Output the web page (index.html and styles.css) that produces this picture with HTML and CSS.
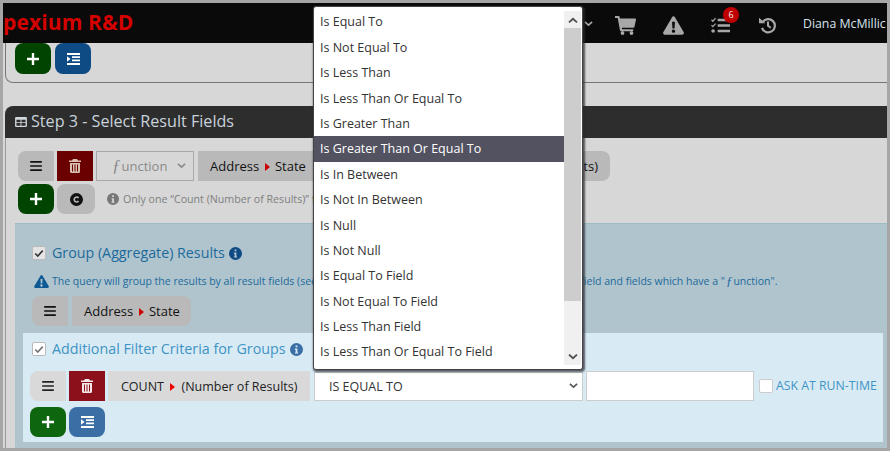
FILE: index.html
```html
<!DOCTYPE html>
<html lang="en">
<head>
<meta charset="utf-8">
<title>Query builder</title>
<link rel="stylesheet" href="styles.css">
</head>
<body>
<svg class="defs" width="0" height="0" aria-hidden="true">
  <defs>
    <symbol id="bars" viewBox="0 0 14 12"><path d="M0 0h14v2H0zM0 5h14v2H0zM0 10h14v2H0z"/></symbol>
    <symbol id="trash" viewBox="0 0 12 14"><path fill-rule="evenodd" d="M4 0h4l1 1.500h3V3H0V1.500h3zM1 4h10v8.500A1.500 1.500 0 0 1 9.500 14h-7A1.500 1.500 0 0 1 1 12.500zM3 5.500v7h1v-7zM5.500 5.500v7h1v-7zM8 5.500v7h1v-7z"/></symbol>
    <symbol id="plus" viewBox="0 0 12 12"><path d="M4.800 0h2.400v4.800H12v2.400H7.200V12H4.800V7.200H0V4.800h4.800z"/></symbol>
    <symbol id="indent" viewBox="0 0 13 12"><path fill-rule="evenodd" d="M0 0h13v2H0zM5 3.300h8v1.700H5zM5 6.500h8v1.700H5zM0 10h13v2H0zM0 3.200l3.600 2.800L0 8.800z"/></symbol>
    <symbol id="info" viewBox="0 0 14 14"><path fill-rule="evenodd" d="M7 0a7 7 0 1 1 0 14A7 7 0 0 1 7 0zM6 2.600v2h2v-2zM5.200 6v1.300H6v2.900h-.8v1.200h3.600v-1.200H8V6z"/></symbol>
    <symbol id="warn" viewBox="0 0 16 14"><path fill-rule="evenodd" d="M8 0c.5 0 .9.300 1.100.700l6.700 11.500c.4.800-.1 1.800-1.100 1.800H1.300C.3 14-.2 13 .2 12.200L6.900.700C7.100.300 7.500 0 8 0zM6.900 4.200l.3 5h1.600l.3-5zM8 10a1.300 1.300 0 1 0 0 2.600A1.300 1.300 0 0 0 8 10z"/></symbol>
    <symbol id="chev" viewBox="0 0 10 6"><path d="M1 .6 5 4.200 9 .6" fill="none" stroke="currentColor" stroke-width="1.800"/></symbol>
  </defs>
</svg>
<div class="frame">
  <header class="topbar">
    <div class="brand">pexium R&amp;D</div>
    <nav class="tools">
      <svg class="tool-chev"><use href="#chev"/></svg>
      <svg class="tool cart" viewBox="0 0 21 19"><path fill-rule="evenodd" d="M0 0h3.600c.5 0 .9.300 1 .800L4.900 2.500H20c.7 0 1.100.6 1 1.200l-1.600 7.200c-.1.500-.5.800-1 .800H6.900l.3 1.600h11v1.900H6c-.5 0-.9-.3-1-.800L2.700 1.900H0zM7.500 15.200a1.900 1.900 0 1 1 0 3.800 1.900 1.900 0 0 1 0-3.800zM16.500 15.200a1.900 1.900 0 1 1 0 3.800 1.900 1.900 0 0 1 0-3.800z"/></svg>
      <svg class="tool warn"><use href="#warn"/></svg>
      <div class="tasks">
        <svg class="tool tasks-icon" viewBox="0 0 20 17"><path d="M7 1.500h13v2.600H7zM7 7.200h13v2.600H7zM7 13h13v2.600H7z"/><path d="M.5 2.500 2 4 4.800.8" fill="none" stroke="currentColor" stroke-width="1.300"/><path d="M.5 8.200 2 9.700l2.800-3.200" fill="none" stroke="currentColor" stroke-width="1.300"/><circle cx="2.200" cy="14.300" r="1.900"/></svg>
        <span class="badge">6</span>
      </div>
      <svg class="tool history" viewBox="0 0 18 17"><path d="M3.700 5.200A6.600 6.600 0 1 1 3 10.800" fill="none" stroke="currentColor" stroke-width="2.200"/><path d="M0 .8 6.300 6.200H0z"/><path d="M9 4.500v4.300l2.800 2" fill="none" stroke="currentColor" stroke-width="2"/></svg>
      <span class="user">Diana McMillic</span>
    </nav>
  </header>

  <section class="step-tail">
    <div class="btn-row">
      <button class="btn btn-add-dark l-round"><svg class="ico-plus"><use href="#plus"/></svg></button>
      <button class="btn btn-indent-dark r-round"><svg class="ico-indent"><use href="#indent"/></svg></button>
    </div>
  </section>

  <section class="step">
    <h2 class="step-title">
      <svg class="ico-table" viewBox="0 0 13 11"><path fill-rule="evenodd" d="M1 0h11a1 1 0 0 1 1 1v9a1 1 0 0 1-1 1H1a1 1 0 0 1-1-1V1a1 1 0 0 1 1-1zM1.500 3v2.700H6V3zM7 3v2.700h4.500V3zM1.500 6.700v2.800H6V6.700zM7 6.700v2.800h4.500V6.700z"/></svg>
      Step 3 - Select Result Fields
    </h2>
    <div class="step-body">
      <div class="field-row">
        <button class="btn btn-grey l-round"><svg class="ico-bars"><use href="#bars"/></svg></button>
        <button class="btn btn-del-dark"><svg class="ico-trash"><use href="#trash"/></svg></button>
        <div class="fn-select"><span><i>ƒ</i>unction</span><svg class="chev"><use href="#chev"/></svg></div>
        <div class="chip chip-wide">
          <span>Address <b class="arrow"></b> State</span>
          <span>COUNT <b class="arrow"></b> (Number of Results)</span>
        </div>
      </div>
      <div class="btn-row second">
        <button class="btn btn-add-dark l-round"><svg class="ico-plus"><use href="#plus"/></svg></button>
        <button class="btn btn-grey r-round btn-c"><svg class="ico-c" viewBox="0 0 14 14"><path fill-rule="evenodd" d="M7 0a7 7 0 1 1 0 14A7 7 0 0 1 7 0zM7.200 3.500a3.500 3.500 0 1 0 2.700 5.700L8.500 8a1.700 1.700 0 1 1 0-2l1.400-1.200a3.500 3.500 0 0 0-2.700-1.300z"/></svg></button>
        <p class="note"><svg class="ico-info"><use href="#info"/></svg><span>Only one “Count (Number of Results)” field may be selected.</span></p>
      </div>

      <div class="group">
        <label class="check-line">
          <span class="check"><svg viewBox="0 0 12 10"><path d="M1.500 5 4.500 8 10.500 1.500" fill="none" stroke="#333" stroke-width="2"/></svg></span>
          <span class="group-title">Group (Aggregate) Results</span>
          <svg class="ico-info blue"><use href="#info"/></svg>
        </label>
        <p class="warning"><svg class="ico-warn"><use href="#warn"/></svg><span>The query will group the results by all result fields (see below). Aggregates are applied to each count or total field and fields which have a "<i>ƒ</i>unction".</span></p>
        <div class="group-row">
          <button class="btn btn-grey l-round"><svg class="ico-bars"><use href="#bars"/></svg></button>
          <div class="chip chip-group"><span>Address <b class="arrow"></b> State</span></div>
        </div>

        <div class="filters">
          <label class="check-line">
            <span class="check light"><svg viewBox="0 0 12 10"><path d="M1.500 5 4.500 8 10.500 1.500" fill="none" stroke="#777" stroke-width="2"/></svg></span>
            <span class="filter-title">Additional Filter Criteria for Groups</span>
            <svg class="ico-info mid"><use href="#info"/></svg>
          </label>
          <div class="filter-row">
            <button class="btn btn-light l-round"><svg class="ico-bars"><use href="#bars"/></svg></button>
            <button class="btn btn-del"><svg class="ico-trash"><use href="#trash"/></svg></button>
            <div class="chip chip-filter"><span>COUNT <b class="arrow bright"></b> (Number of Results)</span></div>
            <div class="op-select"><span>IS EQUAL TO</span><svg class="chev"><use href="#chev"/></svg></div>
            <div class="value-input"></div>
            <span class="empty-check"></span>
            <span class="ask">ASK AT RUN-TIME</span>
          </div>
          <div class="btn-row third">
            <button class="btn btn-add l-round"><svg class="ico-plus"><use href="#plus"/></svg></button>
            <button class="btn btn-indent r-round"><svg class="ico-indent"><use href="#indent"/></svg></button>
          </div>
        </div>
      </div>
    </div>
  </section>

  <div class="dropdown">
    <ul class="options">
      <li>Is Equal To</li>
      <li>Is Not Equal To</li>
      <li>Is Less Than</li>
      <li>Is Less Than Or Equal To</li>
      <li>Is Greater Than</li>
      <li class="selected">Is Greater Than Or Equal To</li>
      <li>Is In Between</li>
      <li>Is Not In Between</li>
      <li>Is Null</li>
      <li>Is Not Null</li>
      <li>Is Equal To Field</li>
      <li>Is Not Equal To Field</li>
      <li>Is Less Than Field</li>
      <li>Is Less Than Or Equal To Field</li>
    </ul>
    <div class="scrollbar">
      <span class="scroll-btn up"><svg><use href="#chev"/></svg></span>
      <span class="scroll-thumb"></span>
      <span class="scroll-track"></span>
      <span class="scroll-btn"><svg><use href="#chev"/></svg></span>
    </div>
  </div>
</div>
</body>
</html>
```

FILE: styles.css
```css
* { box-sizing: border-box; }
html, body { margin: 0; padding: 0; }
body { width: 890px; height: 451px; overflow: hidden; font-family: "Open Sans", sans-serif; color: #222; background: #a6a6a6; }
.defs { position: absolute; }
p, h2, ul { margin: 0; padding: 0; }
button { border: 0; padding: 0; margin: 0; font: inherit; }
svg { display: block; fill: currentColor; }

.frame { position: relative; width: 890px; height: 451px; border: 3px solid #a6a6a6; background: #d7d7d7; overflow: hidden; }

.topbar { height: 40px; background: #0a0a0a; display: flex; align-items: center; justify-content: space-between; }
.brand { color: #d40000; font-size: 21px; font-weight: 700; line-height: 40px; letter-spacing: .12px; margin-top: -2px; }
.tools { display: flex; align-items: center; color: #a8a8a8; width: 306px; height: 40px; flex: none; position: relative; padding-top: 5px; }
.tool-chev { width: 9px; height: 6px; color: #a8a8a8; margin: -4px 22px 0 3px; }
.tool { flex: none; }
.cart { width: 21px; height: 19px; margin-right: 27px; }
.warn { width: 21px; height: 19px; margin-right: 27px; }
.tasks { position: relative; margin-right: 29px; }
.tasks-icon { width: 19px; height: 17px; }
.badge { position: absolute; left: 12px; top: -10px; width: 16px; height: 16px; border-radius: 50%; background: #c00000; color: #eee; font-size: 9px; line-height: 16px; text-align: center; }
.history { width: 18px; height: 17px; margin-right: 26px; }
.user { color: #d8e4ee; font-size: 12.300px; white-space: nowrap; margin-top: -5px; }

.step-tail { margin: 0 -4px 0 2px; height: 40px; border-left: 1px solid #777; border-bottom: 1px solid #777; border-bottom-left-radius: 8px; padding-left: 9px; }

.btn-row { display: flex; gap: 4px; }
.btn { width: 36px; height: 30px; display: flex; align-items: center; justify-content: center; flex: none; color: #fff; }
.step-tail .btn { height: 31px; }
.l-round { border-radius: 8px 0 0 8px; }
.r-round { border-radius: 0 8px 8px 0; }
.btn-row .l-round { border-radius: 8px; }
.btn-row .r-round { border-radius: 8px; }
.btn-add-dark { background: #004400; }
.btn-indent-dark { background: #0e4a84; }
.btn-add { background: #0e660e; }
.btn-indent { background: #3a6ea5; }
.btn-grey { background: #b9b9b9; color: #111; }
.btn-light { background: #d9d9d9; color: #222; }
.btn-del-dark { background: #6a0000; color: #d9c0b0; }
.btn-del { background: #8c101c; color: #f2e8e8; }
.ico-plus { width: 12px; height: 12px; }
.ico-indent { width: 13px; height: 12px; }
.ico-bars { width: 12px; height: 10px; }
.ico-trash { width: 12px; height: 14px; }
.ico-c { width: 13px; height: 13px; }
.btn-c { width: 38px; }

.step { margin: 23px -4px 0 2px; }
.step-title { height: 32px; background: #2d2d2d; border-radius: 8px 0 0 0; color: #c9d3dc; font-size: 16.150px; font-weight: 400; line-height: 30px; display: flex; align-items: center; gap: 4px; padding: 0 0 2px 10px; }
.ico-table { width: 12px; height: 10px; color: #d0d8de; margin-top: 1px; }

.step-body { padding: 13px 0 0 12px; border-left: 1px solid #9a9a9a; }
.field-row { display: flex; height: 30px; gap: 3px; }
.fn-select { width: 98px; height: 30px; border: 1px solid #a9a9a9; display: flex; align-items: center; justify-content: space-between; padding: 0 7px 0 15px; color: #8a8a8a; font-size: 13px; }
.fn-select i { font-size: 17px; line-height: 1; margin-right: 1px; }
.chev { width: 9px; height: 6px; color: #8a8a8a; }
.chip { background: #b9b9b9; height: 30px; display: flex; align-items: center; font-size: 13px; color: #111; white-space: nowrap; }
.chip-wide { margin-left: 1px; width: 412px; justify-content: space-between; padding: 0 12px; border-radius: 0 8px 8px 0; }
.arrow { display: inline-block; width: 0; height: 0; border-left: 5px solid #c00; border-top: 4.500px solid transparent; border-bottom: 4.500px solid transparent; margin: 0 2px; }
.arrow.bright { border-left-color: #e00; margin: 0 3px; }
.second { margin-top: 3px; gap: 3px; align-items: center; }
.note { display: flex; align-items: center; gap: 4px; margin-left: 9px; font-size: 10.650px; color: #808080; white-space: nowrap; height: 30px; margin-top: -1px; }
.ico-info { width: 12px; height: 12px; color: #777; flex: none; }
.ico-info.blue { width: 13px; height: 13px; color: #0e4a84; }
.ico-info.mid { width: 13px; height: 13px; color: #3a6ea5; }

.group { margin: 9px 0 0 -3px; height: 230px; background: #b0c4cd; border-top: 1px solid #9cbbc4; padding: 17px 4px 0 8px; }
.check-line { display: flex; align-items: center; gap: 6px; }
.check { width: 14px; height: 14px; border: 1px solid #bbb; background: #e4e4e4; margin-left: 9px; border-radius: 2px; padding: 1px; flex: none; display: block; }
.check svg { width: 10px; height: 9px; margin-top: 1px; }
.check.light { background: #fff; }
.group-title { font-size: 14.250px; line-height: 24px; color: #1c6a9c; margin-right: -2px; }
.warning { display: flex; align-items: center; gap: 3px; height: 18px; margin: 7px 0 0 11px; font-size: 10.500px; color: #1c6a9c; white-space: nowrap; }
.warning i { font-family: "Liberation Serif", serif; font-style: italic; font-size: 13px; line-height: 1; margin: 0 1px; }
.fn-select i { font-family: "Liberation Serif", serif; font-style: italic; }
.ico-warn { width: 15px; height: 13px; color: #0e5a94; flex: none; }
.group-row { display: flex; gap: 4px; margin: 6px 0 0 9px; }
.chip-group { width: 119px; padding-left: 12px; border-radius: 0 8px 8px 0; }
.filters { margin: 7px 0 0 0; height: 109px; background: #d8ebf4; padding: 4px 0 0 7px; width: 860px; }
.filters .check { margin-left: 2px; }
.filter-title { font-size: 14.300px; line-height: 24px; color: #3f93c4; margin-right: -2px; }
.filter-row { display: flex; align-items: center; height: 30px; margin-top: 10px; }
.filter-row .btn-del { margin-left: 3px; }
.chip-filter { background: #d9d9d9; width: 202px; margin-left: 3px; padding-left: 13px; color: #222; font-size: 12.500px; }
.op-select { margin-left: 4px; width: 269px; height: 29px; background: #fff; border: 1px solid #ccc; display: flex; align-items: center; justify-content: space-between; padding: 0 4px 0 14px; font-size: 12.500px; color: #333; }
.op-select .chev { color: #555; }
.value-input { margin-left: 3px; width: 168px; height: 30px; background: #fff; border: 1px solid #ccc; margin-top: -1px; }
.empty-check { margin-left: 5px; width: 14px; height: 14px; background: #fff; border: 1px solid #ccc; border-radius: 2px; margin-top: -1px; }
.ask { margin-left: 3px; font-size: 12.300px; color: #3f93c4; white-space: nowrap; margin-top: -1px; }
.third { margin-top: 6px; gap: 3px; }

.dropdown { position: absolute; left: 310px; top: 3px; width: 270px; height: 364px; background: #fff; border: 1px solid #444; border-radius: 3px; box-shadow: 1px 1px 2px 1px rgba(40,40,50,.75); display: flex; padding-top: 2px; }
.options { list-style: none; width: 250px; flex: none; padding-top: .4px; }
.options li { height: 25.400px; line-height: 25.400px; font-size: 12.500px; padding-left: 6px; color: #333; white-space: nowrap; }
.options li.selected { background: #525260; color: #fff; }
.scrollbar { width: 17px; flex: none; display: flex; flex-direction: column; background: #f0f0f0; margin: 2px 0 4px; }
.scroll-btn { height: 17px; display: flex; align-items: center; justify-content: center; color: #505050; flex: none; background: #f0f0f0; }
.scroll-btn svg { width: 10px; height: 6px; }
.scroll-btn.up svg { transform: rotate(180deg); }
.scroll-thumb { height: 273px; background: #cdcdcd; flex: none; }
.scroll-track { flex: 1; background: #f0f0f0; }
```
